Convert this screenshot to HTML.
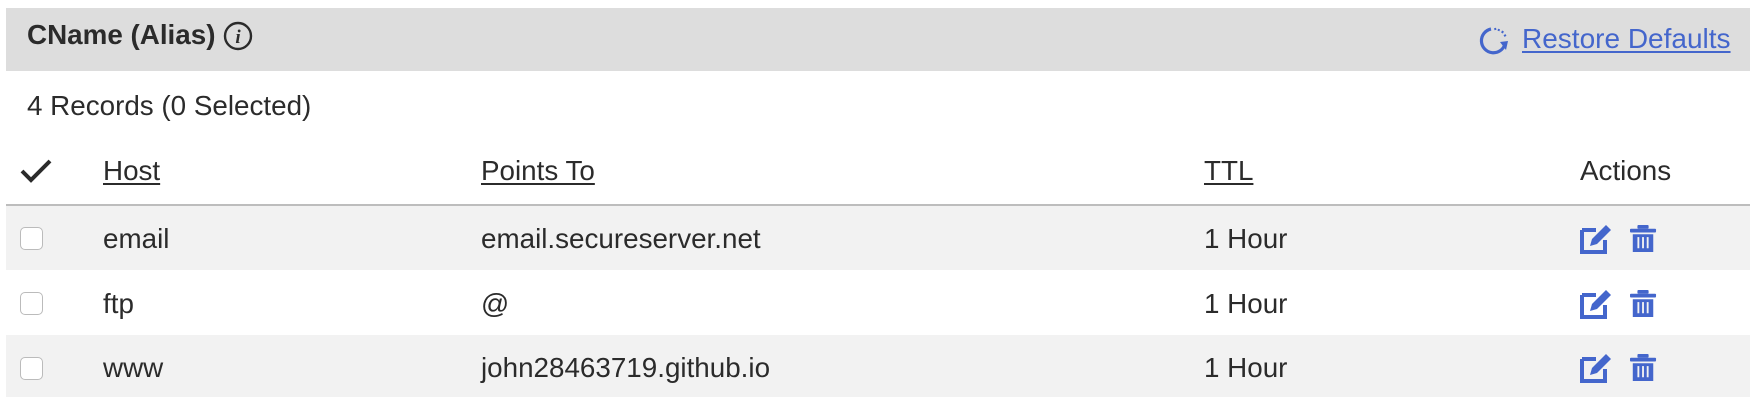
<!DOCTYPE html>
<html><head><meta charset="utf-8"><style>
body{margin:0;width:1756px;height:402px;background:#fff;font-family:"Liberation Sans",Arial,sans-serif;color:#2b2b2b;position:relative;overflow:hidden}
.a{position:absolute;white-space:nowrap}
.hdr{left:6px;top:8px;width:1744px;height:63px;background:#dddddd}
.row{left:6px;width:1744px;height:64px}
.t{font-size:27.8px;line-height:30px}
.u{text-decoration:underline;text-underline-offset:3px}
.cb{left:20px;width:23px;height:23px;border:1px solid #bbb;border-radius:5px;background:#fff;box-sizing:border-box}
</style></head><body>
<div class="a hdr"></div>
<div class="a t" style="left:27px;top:20px;font-weight:bold;font-size:27.8px">CName (Alias)</div>
<svg class="a" style="left:222px;top:20px" width="32" height="32" viewBox="0 0 32 32"><circle cx="16" cy="16" r="13" fill="none" stroke="#2b2b2b" stroke-width="2.4"/><text x="16" y="23" text-anchor="middle" font-family="Liberation Serif,serif" font-style="italic" font-weight="bold" font-size="19" fill="#2b2b2b">i</text></svg>
<svg class="a" style="left:1479px;top:24px" width="32" height="32" viewBox="0 0 32 32"><path d="M12 5 A12 12 0 1 0 26 20" fill="none" stroke="#4466cc" stroke-width="3.2"/><path d="M21 18 L29 17 L27 26 Z" fill="#4466cc"/><g stroke="#4466cc" stroke-width="2"><line x1="16" y1="4" x2="16.5" y2="6"/><line x1="20" y1="5" x2="19.5" y2="7"/><line x1="24" y1="7" x2="23" y2="9"/><line x1="27" y1="11" x2="25" y2="12"/></g></svg>
<div class="a t u" style="left:1522px;top:24px;font-size:28px;color:#4466cc">Restore Defaults</div>
<div class="a t" style="left:27px;top:91px">4 Records (0 Selected)</div>
<svg class="a" style="left:19px;top:157px" width="34" height="28" viewBox="0 0 34 28"><path d="M3 14 L12 23 L31 4" fill="none" stroke="#2b2b2b" stroke-width="4"/></svg>
<div class="a t u" style="left:103px;top:156px">Host</div>
<div class="a t u" style="left:481px;top:156px">Points To</div>
<div class="a t u" style="left:1204px;top:156px">TTL</div>
<div class="a t" style="left:1580px;top:156px">Actions</div>
<div class="a" style="left:6px;top:204px;width:1744px;height:2px;background:#bdbdbd"></div>
<div class="a row" style="top:206px;background:#f2f2f2"></div>
<div class="a row" style="top:335px;background:#f2f2f2;height:62px"></div>
<div class="a cb" style="top:227px"></div>
<div class="a cb" style="top:292px"></div>
<div class="a cb" style="top:357px"></div>
<div class="a t" style="left:103px;top:224px">email</div>
<div class="a t" style="left:481px;top:224px">email.secureserver.net</div>
<div class="a t" style="left:1204px;top:224px">1 Hour</div>
<div class="a t" style="left:103px;top:289px">ftp</div>
<div class="a t" style="left:481px;top:289px">@</div>
<div class="a t" style="left:1204px;top:289px">1 Hour</div>
<div class="a t" style="left:103px;top:353px">www</div>
<div class="a t" style="left:481px;top:353px">john28463719.github.io</div>
<div class="a t" style="left:1204px;top:353px">1 Hour</div>
<svg width="0" height="0" style="position:absolute"><defs>
<g id="ed"><path d="M2 8 H16 M2 8 V30 H25 V18" fill="none" stroke="#4466cc" stroke-width="4"/><path d="M10 24 L12 17 L26 3 L31 8 L17 22 Z" fill="#4466cc"/></g>
<g id="tr"><rect x="8" y="0" width="12" height="4" rx="1" fill="#4466cc"/><rect x="0" y="4" width="28" height="4" rx="1" fill="#4466cc"/><path d="M3 10 H25 V29 H3 Z" fill="#4466cc"/><g stroke="#f2f2f2" stroke-width="2"><line x1="9" y1="13" x2="9" y2="25"/><line x1="14" y1="13" x2="14" y2="25"/><line x1="19" y1="13" x2="19" y2="25"/></g></g>
</defs></svg>
<svg class="a" style="left:1580px;top:222px" width="34" height="32"><use href="#ed"/></svg>
<svg class="a" style="left:1630px;top:225px" width="28" height="30"><use href="#tr" transform="scale(0.93)"/></svg>
<svg class="a" style="left:1580px;top:287px" width="34" height="32"><use href="#ed"/></svg>
<svg class="a" style="left:1630px;top:290px" width="28" height="30"><use href="#tr" transform="scale(0.93)"/></svg>
<svg class="a" style="left:1580px;top:351px" width="34" height="32"><use href="#ed"/></svg>
<svg class="a" style="left:1630px;top:354px" width="28" height="30"><use href="#tr" transform="scale(0.93)"/></svg>
</body></html>
